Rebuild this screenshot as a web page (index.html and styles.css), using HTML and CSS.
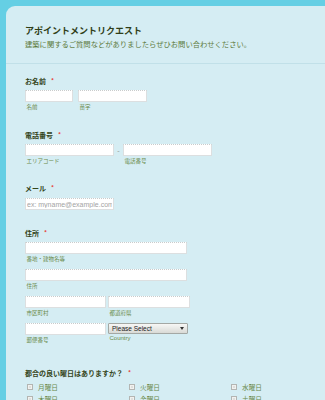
FILE: index.html
```html
<!DOCTYPE html>
<html lang="ja">
<head>
    <meta charset="UTF-8">
    <meta name="viewport" content="width=device-width, initial-scale=1.0">
    <title>アポイントメントリクエスト</title>
    <link rel="stylesheet" href="styles.css">
</head>
<body>
    <div class="form-card">
        <div class="form-header">
            <h1 class="form-title">アポイントメントリクエスト</h1>
            <p class="form-subtitle">建築に関するご質問などがありましたらぜひお問い合わせください。</p>
        </div>

        <ul class="form-fields">
            <li class="field">
                <label class="field-label">お名前<span class="required">*</span></label>
                <div class="field-row gap-name">
                    <span class="sub">
                        <input class="text-input w-first" type="text">
                        <span class="sublabel">名前</span>
                    </span>
                    <span class="sub">
                        <input class="text-input w-last" type="text">
                        <span class="sublabel">苗字</span>
                    </span>
                </div>
            </li>

            <li class="field field-phone">
                <label class="field-label">電話番号<span class="required">*</span></label>
                <div class="field-row">
                    <span class="sub">
                        <input class="text-input w-phone" type="text">
                        <span class="sublabel">エリアコード</span>
                    </span>
                    <span class="phone-dash">-</span>
                    <span class="sub">
                        <input class="text-input w-phone" type="text">
                        <span class="sublabel">電話番号</span>
                    </span>
                </div>
            </li>

            <li class="field field-mail">
                <label class="field-label">メール<span class="required">*</span></label>
                <div class="field-row row-mail">
                    <input class="text-input w-phone" type="email" placeholder="ex: myname@example.com">
                </div>
            </li>

            <li class="field field-address">
                <label class="field-label">住所<span class="required">*</span></label>
                <div class="field-row">
                    <span class="sub">
                        <input class="text-input w-full" type="text">
                        <span class="sublabel">番地・建物名等</span>
                    </span>
                </div>
                <div class="field-row row-more">
                    <span class="sub">
                        <input class="text-input w-full" type="text">
                        <span class="sublabel">住所</span>
                    </span>
                </div>
                <div class="field-row row-more gap-half">
                    <span class="sub">
                        <input class="text-input w-half" type="text">
                        <span class="sublabel">市区町村</span>
                    </span>
                    <span class="sub">
                        <input class="text-input w-half2" type="text">
                        <span class="sublabel">都道府県</span>
                    </span>
                </div>
                <div class="field-row row-more gap-half">
                    <span class="sub">
                        <input class="text-input w-half" type="text">
                        <span class="sublabel">郵便番号</span>
                    </span>
                    <span class="sub">
                        <div class="select-box">
                            <span>Please Select</span>
                            <span class="select-arrow"></span>
                        </div>
                        <span class="sublabel sublabel-latin">Country</span>
                    </span>
                </div>
            </li>

            <li class="field field-days">
                <label class="field-label">都合の良い曜日はありますか？<span class="required">*</span></label>
                <div class="day-grid">
                    <span class="day"><span class="checkbox"></span>月曜日</span>
                    <span class="day"><span class="checkbox"></span>火曜日</span>
                    <span class="day"><span class="checkbox"></span>水曜日</span>
                    <span class="day"><span class="checkbox"></span>木曜日</span>
                    <span class="day"><span class="checkbox"></span>金曜日</span>
                    <span class="day"><span class="checkbox"></span>土曜日</span>
                </div>
            </li>
        </ul>
    </div>
</body>
</html>
```

FILE: styles.css
```css
body {
    margin: 0;
    background-color: #65cfe4;
    font-family: "Noto Sans CJK JP", "Noto Sans", sans-serif;
    overflow: hidden;
    height: 400px;
}

.form-card {
    margin: 6px -30px 0 6px;
    height: 420px;
    background-color: #d5edf3;
    border-top-left-radius: 9px;
}

.form-header {
    padding: 19px 19px 14px;
    border-bottom: 1px solid #c1e0e8;
}

.form-title {
    margin: 0;
    font-size: 9px;
    line-height: 12px;
    font-weight: bold;
    color: #2f3e18;
}

.form-subtitle {
    margin: 2px 0 0;
    font-size: 7.3px;
    line-height: 10px;
    color: #5d7b3c;
}

.form-fields {
    list-style: none;
    margin: 0;
    padding: 12px 0 0 19px;
}

.field {
    margin-top: 19px;
}

.field:first-child {
    margin-top: 0;
}

.field-mail, .field-address {
    margin-top: 18px;
}

.field-days {
    margin-top: 24px;
}

.field-label {
    display: block;
    font-size: 7px;
    line-height: 10px;
    font-weight: bold;
    color: #34451b;
}

.required {
    color: #e8413a;
    font-size: 6px;
    margin-left: 5px;
    vertical-align: 1px;
}

.field-row {
    display: flex;
    margin-top: 4px;
}

.gap-name {
    gap: 5px;
}

.gap-half {
    gap: 2px;
}

.row-mail {
    margin-top: 5px;
}

.row-more {
    margin-top: 6px;
}

.sub {
    display: flex;
    flex-direction: column;
}

.text-input {
    box-sizing: border-box;
    height: 12px;
    margin: 0;
    padding: 0 1px;
    background-color: #ffffff;
    border: 1px solid #dcdfe0;
    border-top: 1px dotted #c9cccc;
    font-family: "Liberation Sans", Arial, sans-serif;
    font-size: 7px;
    color: #333333;
    outline: none;
}

.text-input::placeholder {
    color: #a3a3a3;
}

.w-first { width: 48px; }
.w-last { width: 69px; }
.w-phone { width: 89px; }
.w-full { width: 162px; }
.w-half { width: 81px; }
.w-half2 { width: 82px; }

.phone-dash {
    width: 9px;
    height: 12px;
    line-height: 12px;
    text-align: center;
    font-size: 7px;
    color: #8a8f86;
}

.sublabel {
    margin-top: 1px;
    padding-left: 1.5px;
    font-size: 5.5px;
    line-height: 8px;
    color: #6a8a4a;
}

.sublabel-latin {
    margin-top: 0;
    font-family: "Liberation Sans", Arial, sans-serif;
    font-size: 6px;
}

.select-box {
    box-sizing: border-box;
    display: flex;
    justify-content: space-between;
    align-items: center;
    width: 80px;
    height: 11px;
    padding: 0 3px 0 3px;
    border: 1px solid #a4a8a4;
    border-radius: 1px;
    background: linear-gradient(#f7f7f5, #d9dad6);
    font-family: "Liberation Sans", Arial, sans-serif;
    font-size: 6.5px;
    color: #222222;
}

.select-arrow {
    width: 0;
    height: 0;
    border-left: 2px solid transparent;
    border-right: 2px solid transparent;
    border-top: 3px solid #333333;
}

.day-grid {
    display: grid;
    grid-template-columns: 102px 102px 102px;
    margin-top: 3px;
    padding-left: 2px;
}

.day {
    display: flex;
    align-items: center;
    height: 12px;
    font-size: 6.7px;
    color: #6a8a4a;
}

.checkbox {
    box-sizing: border-box;
    width: 6px;
    height: 6px;
    margin-right: 5px;
    border: 1px solid #b3b5b2;
    background-color: #dedfdc;
    box-shadow: inset 0 0 0 1px #f1f1ef;
}
```
